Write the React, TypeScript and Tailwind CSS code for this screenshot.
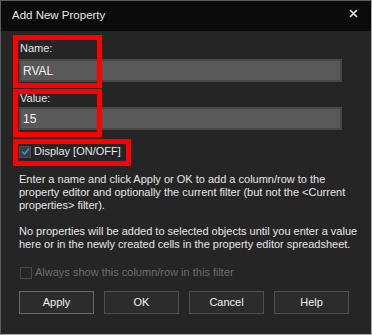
import { useState } from 'react';

const font = { fontFamily: '"Liberation Sans", Arial, sans-serif' };

function Field({ label, value, gap }: { label: string; value: string; gap: string }) {
  return (
    <div className="flex flex-col">
      <label className="h-[12px] pl-px text-[11px] leading-[12px] text-[#e6e6e6]">
        {label}
      </label>
      <input
        readOnly
        value={value}
        className={
          gap +
          ' h-[23px] w-[323px] border-2 border-[#474747] bg-[#595959] px-[2px] text-[12px] text-[#f2f2f2] outline-none'
        }
      />
    </div>
  );
}

function Button({ label, primary }: { label: string; primary?: boolean }) {
  return (
    <button
      className={
        'h-[23px] w-[75px] border bg-[#2c2c2c] text-[11px] text-[#f0f0f0] ' +
        (primary ? 'border-[#6a6a6a]' : 'border-[#505050]')
      }
    >
      {label}
    </button>
  );
}

export default function App() {
  const [display, setDisplay] = useState(true);

  return (
    <div
      style={font}
      className="relative flex h-[335px] w-[372px] flex-col border border-t-[#5c5c5c] border-l-[#5c5c5c] border-r-[#a8a8a8] border-b-[#a8a8a8] bg-[#252525]"
    >
      <div className="flex h-[30px] shrink-0 items-center justify-between bg-[#0b0b0b] pl-[11px] pr-[13px]">
        <span className="text-[11.5px] text-[#e8e8e8]">Add New Property</span>
        <svg width="9" height="9" viewBox="0 0 9 9" className="mb-[6px]">
          <path d="M1 1 L8 8 M8 1 L1 8" stroke="#f2f2f2" strokeWidth="1.6" />
        </svg>
      </div>

      <div className="flex flex-col pl-[18px] pt-[11px]">
        <Field label="Name:" value="RVAL" gap="mt-[5px]" />
        <div className="mt-[10px]">
          <Field label="Value:" value="15" gap="mt-[3px]" />
        </div>

        <label className="mt-[15px] flex h-[13px] items-center gap-[3px] text-[11px] text-[#e6e6e6]">
          <span
            onClick={() => setDisplay(!display)}
            className="flex h-[12px] w-[12px] items-center justify-center border border-[#4a4a4a] bg-[#3c3c3c]"
          >
            {display && (
              <svg width="9" height="9" viewBox="0 0 9 9">
                <path d="M1 4.5 L3.5 7 L8 1.5" fill="none" stroke="#2f95e6" strokeWidth="1.6" />
              </svg>
            )}
          </span>
          Display [ON/OFF]
        </label>

        <div className="mt-[15px] w-[346px] text-[11px] leading-[13px] text-[#e6e6e6]">
          <p className="w-[332px]">
            Enter a name and click Apply or OK to add a column/row to the property editor and
            optionally the current filter (but not the &lt;Current properties&gt; filter).
          </p>
          <p className="mt-[13px]">
            No properties will be added to selected objects until you enter a value here or in
            the newly created cells in the property editor spreadsheet.
          </p>
        </div>

        <label className="mt-[15px] flex h-[13px] items-center gap-[3px] pl-px text-[11px] text-[#6c6c6c]">
          <span className="h-[12px] w-[12px] border border-[#484848]" />
          Always show this column/row in this filter
        </label>

        <div className="mt-[12px] flex gap-[10px]">
          <Button label="Apply" primary />
          <Button label="OK" />
          <Button label="Cancel" />
          <Button label="Help" />
        </div>
      </div>

      <div className="pointer-events-none absolute left-[12px] top-[34px] h-[53px] w-[89px] border-[5px] border-[#ff0000]" />
      <div className="pointer-events-none absolute left-[12px] top-[88px] h-[48px] w-[89px] border-[5px] border-[#ff0000]" />
      <div className="pointer-events-none absolute left-[12px] top-[138px] h-[27px] w-[118px] border-[5px] border-[#ff0000]" />
    </div>
  );
}
